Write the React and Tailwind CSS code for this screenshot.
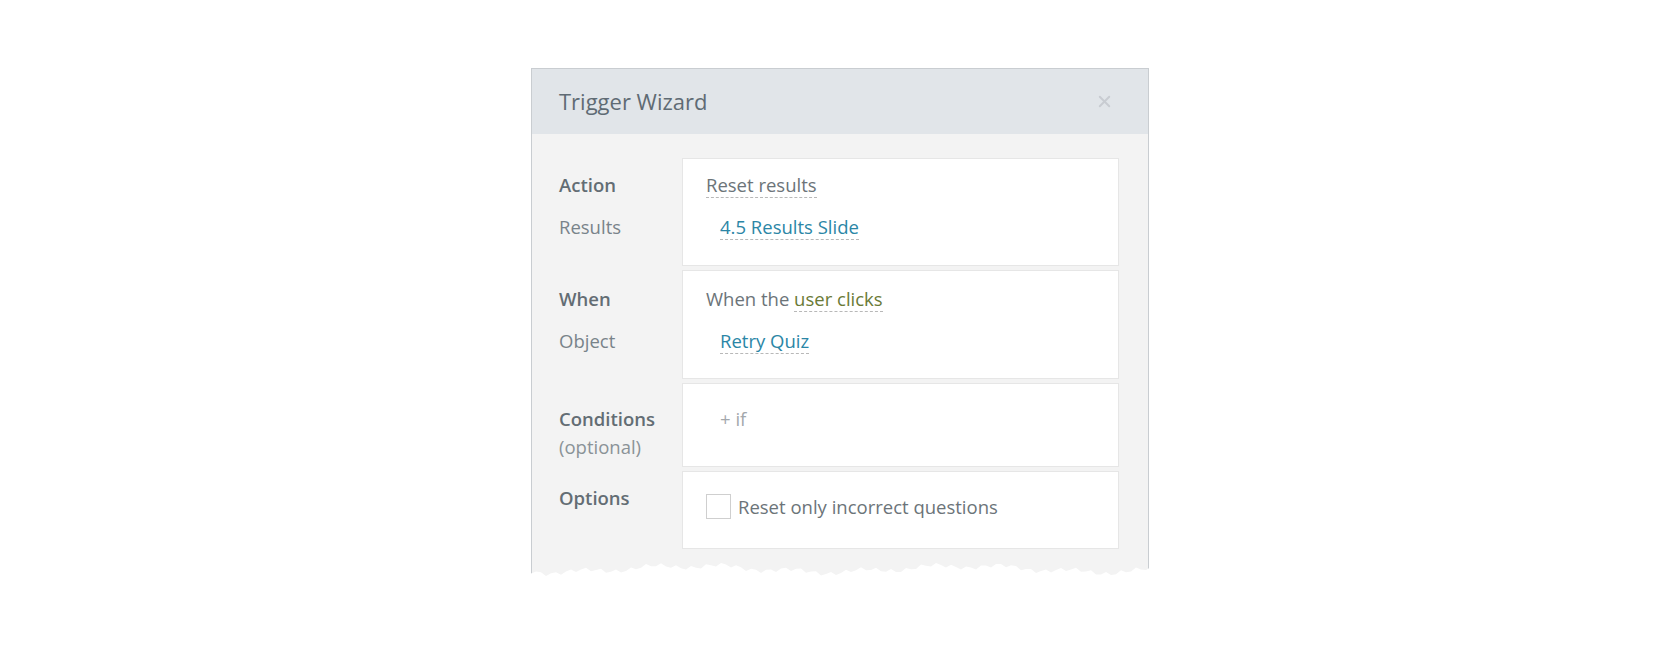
import { X } from "lucide-react";

const font = { fontFamily: '"Open Sans", "Noto Sans", sans-serif' };

// jagged torn-paper edge along the bottom of the dialog
const tornPoints = (() => {
  const pts = [];
  const w = 620;
  for (let x = 0; x <= w; x += 5) {
    const y = 10 + Math.sin(x * 0.09) * 2 + Math.sin(x * 0.023 + 1) * 3 + Math.cos(x * 0.41) * 2;
    pts.push(`${x},${y.toFixed(1)}`);
  }
  return `0,24 ${pts.join(" ")} ${w},24`;
})();

const Dotted = ({ children, className = "" }) => (
  <span className={`inline-block border-b border-dashed border-[#b8b8b8] ${className}`}>{children}</span>
);

export default function App() {
  return (
    <div className="min-h-[649px] w-full bg-white" style={font}>
      <div className="pt-[68px] pl-[531px]">
        <div className="relative w-[618px] border border-b-0 border-[#c9cdd1] bg-[#f3f3f3]">
          <div className="flex h-[65px] items-center justify-between bg-[#e1e5e9] pl-[27px] pr-[34px]">
            <span className="text-[22px] text-[#5f6b74]">Trigger Wizard</span>
            <X size={19} strokeWidth={2.4} className="text-[#c8ccd1]" />
          </div>

          <div className="flex flex-col gap-[4px] pt-[24px] pr-[29px] pb-[32px] text-[18.5px] leading-6">
            {/* Action */}
            <div className="flex">
              <div className="w-[150px] pl-[27px] pt-[15px]">
                <div className="font-semibold text-[#636d74]">Action</div>
                <div className="mt-[18px] text-[#79838a]">Results</div>
              </div>
              <div className="h-[108px] w-[437px] border border-[#e6e6e6] bg-white pl-[23px] pt-[14px]">
                <Dotted className="text-[#6c7479]">Reset results</Dotted>
                <div className="mt-[17px] pl-[14px]">
                  <Dotted className="text-[#2b86a6]">4.5 Results Slide</Dotted>
                </div>
              </div>
            </div>

            {/* When */}
            <div className="flex">
              <div className="w-[150px] pl-[27px] pt-[17px]">
                <div className="font-semibold text-[#636d74]">When</div>
                <div className="mt-[18px] text-[#79838a]">Object</div>
              </div>
              <div className="h-[109px] w-[437px] border border-[#e6e6e6] bg-white pl-[23px] pt-[16px]">
                <span className="text-[#6c7479]">When the </span>
                <Dotted className="text-[#6a7a36]">user clicks</Dotted>
                <div className="mt-[17px] pl-[14px]">
                  <Dotted className="text-[#2b86a6]">Retry Quiz</Dotted>
                </div>
              </div>
            </div>

            {/* Conditions */}
            <div className="flex">
              <div className="w-[150px] pl-[27px] pt-[24px]">
                <div className="font-semibold text-[#636d74]">Conditions</div>
                <div className="mt-[4px] text-[#8a9297]">(optional)</div>
              </div>
              <div className="h-[84px] w-[437px] border border-[#e6e6e6] bg-white pl-[37px] pt-[23px] text-[#a3a8ac]">
                + if
              </div>
            </div>

            {/* Options */}
            <div className="flex">
              <div className="w-[150px] pl-[27px] pt-[15px]">
                <div className="font-semibold text-[#636d74]">Options</div>
              </div>
              <div className="flex h-[78px] w-[437px] items-start gap-[7px] border border-[#e6e6e6] bg-white pl-[23px] pt-[22px]">
                <span className="h-[25px] w-[25px] shrink-0 border border-[#cfcfcf] bg-white" />
                <span className="pt-[1px] text-[#6c7479]">Reset only incorrect questions</span>
              </div>
            </div>
          </div>

          <svg
            className="absolute bottom-[-2px] left-[-1px]"
            width="620"
            height="24"
            viewBox="0 0 620 24"
            preserveAspectRatio="none"
          >
            <polygon points={tornPoints} fill="#ffffff" />
          </svg>
        </div>
      </div>
    </div>
  );
}
